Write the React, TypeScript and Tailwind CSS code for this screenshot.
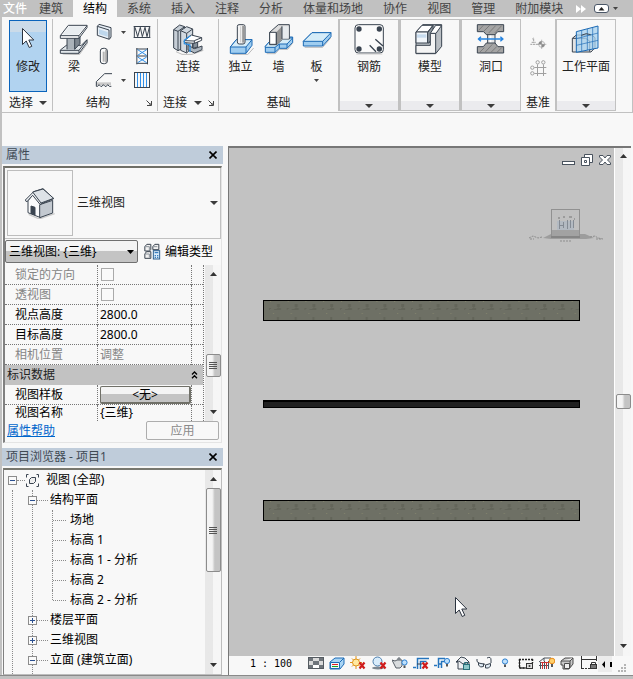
import type { ReactNode } from "react";

const TABS = ["建筑", "结构", "系统", "插入", "注释", "分析", "体量和场地", "协作", "视图", "管理", "附加模块"];

const INK = "#3a4450";

function Caret({ className = "" }: { className?: string }) {
  return (
    <svg className={className} width="8" height="4" viewBox="0 0 8 4" fill="#3c3c3c">
      <path d="M0 0h8L4 4z" />
    </svg>
  );
}

function SmallCaret() {
  return (
    <svg width="5" height="3" viewBox="0 0 5 3" fill="#444">
      <path d="M0 0h5L2.5 3z" />
    </svg>
  );
}

function Launcher() {
  return (
    <svg width="6" height="6" viewBox="0 0 6 6" fill="none" stroke="#444">
      <path d="M0.5 0.5L4 4M5.5 1v4.5H1M3 5h2V3" />
    </svg>
  );
}

/* ---------- ribbon icons ---------- */

function BeamIcon() {
  return (
    <svg width="32" height="32" viewBox="174 66 96 96" stroke={INK} strokeWidth="3" strokeLinejoin="round">
      <path d="M188 159l50 2 24-33v-6" stroke="#bbb" fill="none" />
      <path d="M181 147l18-14h45l17-17v8l-24 33h-56z" fill="#e3e8ec" />
      <path d="M181 148h56l24-31M237 148v9" fill="none" />
      <path d="M201 112h23v34h-23z" fill="#aab2b9" stroke="none" />
      <path d="M224 112l16-8v24l-16 17z" fill="#7c858e" />
      <path d="M201 112v33" />
      <path d="M181 104l24-31h56v7l-24 32h-56z" fill="#fff" />
      <path d="M181 104h56l24-30M237 104v8" fill="none" />
      <path d="M187 101l20-25h49l-21 25z" fill="#e9edf0" stroke="none" />
    </svg>
  );
}

function ConnectionIcon() {
  return (
    <svg width="32" height="32" viewBox="516 68 96 96" stroke={INK} strokeWidth="3" strokeLinejoin="round">
      <path d="M528 154l18 8h30l34-12" stroke="#bbb" fill="none" />
      <path d="M521 88l18-14 15 5v62l-20 10-13-8z" fill="#c6ced6" />
      <path d="M521 88l13 5v58M534 93l20-14" fill="none" />
      <path d="M542 91l18-12 18 7v55l-18 17-18-8z" fill="#d3dae1" />
      <path d="M542 91l18 8v58M560 99l18-13" fill="none" />
      <path d="M564 135l20 10 22-8v11l-22 10-20-9z" fill="#aeb7c0" />
      <path d="M579 122l14-4v22l-14 4z" fill="#86919c" />
      <path d="M552 122l22-18 31 8v8l-22 9-29-2z" fill="#fff" />
      <path d="M583 121l22-9M583 121v8M554 121l29 1" fill="none" />
      <path d="M571 106l-18 14v10l17 4v22" fill="none" stroke="#2f8fe0" strokeWidth="4" />
    </svg>
  );
}

function IsolatedIcon() {
  return (
    <svg width="32" height="32" viewBox="42 68 96 96" stroke="#1c6ab5" strokeWidth="3" strokeLinejoin="round">
      <path d="M64 163h46l18-20" stroke="#bbb" fill="none" />
      <path d="M58 140l18-22h47v17l-18 24H58z" fill="#9fcdf0" />
      <path d="M58 140l18-22h47l-18 22z" fill="#d5ecf8" />
      <path d="M105 140v19" />
      <path d="M79 78q0-5 5-5h13q5 0 5 5v47q0 6-6 6H85q-6 0-6-6z" fill="#f4f4f4" stroke={INK} />
      <path d="M97 76v51" stroke="#999" strokeWidth="7" />
      <path d="M89 78v48" stroke="#c9c9c9" strokeWidth="3" />
    </svg>
  );
}

function WallFoundationIcon() {
  return (
    <svg width="32" height="32" viewBox="156 68 96 96" stroke="#1c6ab5" strokeWidth="3" strokeLinejoin="round">
      <path d="M167 160h26l12-13h25l16-20" stroke="#bbb" fill="none" />
      <path d="M163 138l22-25 28-3h32v16l-17 18h-23l-13 12h-29z" fill="#9fcdf0" />
      <path d="M163 138l22-25h60l-17 18h-23l-13 10h-29z" fill="#d5ecf8" />
      <path d="M192 141v15M205 131v13M228 131v13" />
      <path d="M176 96l26-23h33v43h-20l-18 17h-21z" fill="#ddd" stroke={INK} />
      <path d="M176 96h20v36h-20z" fill="#fff" stroke={INK} />
      <path d="M196 96l17-18v37l-17 18z" fill="#939393" stroke="none" />
      <path d="M213 78h20v37h-20z" fill="#e7ebee" stroke="none" />
      <path d="M196 96v37M213 78v38" stroke={INK} />
    </svg>
  );
}

function SlabIcon() {
  return (
    <svg width="32" height="32" viewBox="270 68 96 96" stroke="#1c6ab5" strokeWidth="3" strokeLinejoin="round">
      <path d="M281 141h54l24-28" stroke="#bbb" fill="none" />
      <path d="M277 123l26-26h57v12l-25 28h-58z" fill="#9fcdf0" />
      <path d="M277 123l26-26h57l-25 26z" fill="#d5ecf8" />
      <path d="M335 123v14" />
    </svg>
  );
}

function RebarIcon() {
  return (
    <svg width="32" height="32" viewBox="424 68 96 96" stroke={INK} strokeWidth="3">
      <rect x="430" y="73" width="85" height="85" rx="10" fill="#fbfbfb" />
      <path d="M434 161h78" stroke="#ccc" />
      <g fill={INK} stroke="none">
        <circle cx="442" cy="86" r="8" />
        <circle cx="503" cy="86" r="8" />
        <circle cx="442" cy="146" r="8" />
        <circle cx="503" cy="146" r="8" />
      </g>
      <path d="M491 117l23 20M474 135l19 19" strokeWidth="4" />
    </svg>
  );
}

function ModelIcon() {
  return (
    <svg width="32" height="32" viewBox="-14 68 96 96" stroke={INK} strokeWidth="3" strokeLinejoin="round">
      <path d="M-8 95L12 73h57v65l-18 22h-59z" fill="#b9bec3" />
      <path d="M-8 95L10 75h33l-16 20z" fill="#fff" />
      <path d="M-8 95h35v33h-35z" fill="#f2f6fa" />
      <path d="M-5 102h28v10h-28z" fill="#c8dcef" stroke="none" />
      <path d="M27 97l16-22v33l-12 20h-4z" fill="#8e969d" />
      <path d="M-8 135h43v-36h16v60h-59z" fill="#f4f4f4" />
      <path d="M35 99l16-24h18l-17 24z" fill="#fff" />
    </svg>
  );
}

function OpeningIcon() {
  return (
    <svg width="32" height="32" viewBox="162 68 96 96" stroke={INK} strokeWidth="3" strokeLinejoin="round">
      <path d="M200 94h22v42h-22z" fill="#e6e6e6" />
      <path d="M206 96h5v38h-5z" fill="#fff" stroke="none" />
      <path d="M169 73h79v21h-18l-8 9h-26l-8-9h-19z" fill="#a4a4a4" />
      <path d="M169 158v-19h18l9-11h26l9 11h17v19z" fill="#a4a4a4" />
      <path d="M173 90l14-15M189 92l17-17M203 98l21-22M221 98l21-22M176 156l14-14M192 156l22-24M210 156l18-18M228 156l14-14" stroke="#666" strokeWidth="2" />
      <path d="M173 116h72M180 109l-8 7 8 7M238 109l8 7-8 7" fill="none" stroke="#2684e0" strokeWidth="4" />
    </svg>
  );
}

function WorkplaneIcon() {
  return (
    <svg width="32" height="32" viewBox="450 70 96 96" stroke={INK} strokeWidth="3" strokeLinejoin="round">
      <path d="M457 116l12-10h46l10 8v30l-12 13h-56z" fill="#e3e3e3" />
      <path d="M457 116h40l12 8v32" fill="none" />
      <path d="M469 96l65-17v66l-65 13z" fill="#a5d2f0" fillOpacity="0.75" stroke="#1c6ab5" />
      <path d="M485 92v63M502 88v63M518 83v65M469 117l65-17M469 137l65-15" stroke="#1c6ab5" strokeWidth="2" />
      <path d="M484 107q15-9 28-2" stroke={INK} fill="none" />
    </svg>
  );
}

function WallIcon() {
  return (
    <svg width="18" height="18" viewBox="291 69 54 54" stroke={INK} strokeWidth="3" strokeLinejoin="round">
      <path d="M298 79l5-6 36 10v28l-5 7-36-12z" fill="#e8eff6" />
      <path d="M298 79l35 11v27" fill="none" />
      <path d="M303 88l26 8v14l-26-8z" fill="#bed7ec" stroke="none" />
    </svg>
  );
}

function ColumnIcon() {
  return (
    <svg width="18" height="18" viewBox="291 141 54 54" stroke={INK} strokeWidth="3">
      <rect x="307" y="145" width="21" height="46" rx="8" fill="#fafafa" />
      <path d="M317 155v30" stroke="#b5b5b5" strokeWidth="6" />
      <path d="M324 149v38" stroke="#777" strokeWidth="3" />
    </svg>
  );
}

function FloorIcon() {
  return (
    <svg width="18" height="18" viewBox="291 215 54 54" stroke={INK} strokeWidth="3" fill="none">
      <path d="M294 249h45v8h-45z" fill="#c9c9c9" stroke="none" />
      <path d="M342 223h-22l-25 24v14h4l4-5 5 5h4l4-5 5 5h4l4-5 5 5h6" />
    </svg>
  );
}

function TrussIcon() {
  return (
    <svg width="18" height="18" viewBox="402 69 54 54" stroke={INK} strokeWidth="3" fill="none">
      <path d="M404 79.500h50M404 112.500h50M406 80v32M452 80v32" />
      <path d="M408 82l8 28 8-28 6 28 8-28 6 28 7-28" />
    </svg>
  );
}

function BraceIcon() {
  return (
    <svg width="18" height="18" viewBox="402 141 54 54" fill="none" strokeWidth="3">
      <path d="M413.500 144v49M445.500 144v49M413 147h32M413 168h32M413 190h32" stroke={INK} />
      <path d="M416 149l27 17M443 149l-27 17M416 171l27 17M443 171l-27 17" stroke="#3090ea" />
    </svg>
  );
}

function BeamSystemIcon() {
  return (
    <svg width="18" height="18" viewBox="402 213 54 54" fill="none" strokeWidth="3">
      <rect x="406.500" y="217.500" width="45" height="45" stroke={INK} />
      <path d="M415.500 219v42M424.500 219v42M433.500 219v42M442.500 219v42" stroke="#3090ea" />
    </svg>
  );
}

function LevelIcon() {
  return (
    <svg width="18" height="18" viewBox="327 105 54 54" stroke="#a0a0a0" strokeWidth="3" fill="none">
      <path d="M331 133h26M337 117l4-3v14M335 127h12" strokeDasharray="6 2" />
      <circle cx="365" cy="133" r="9" strokeWidth="2" />
      <path d="M365 119v28M351 133h28" strokeWidth="2" />
      <path d="M365 124v9h-9a9 9 0 019-9zM365 142v-9h9a9 9 0 01-9 9z" fill="#8a8a8a" stroke="none" />
    </svg>
  );
}

function GridIcon() {
  return (
    <svg width="18" height="18" viewBox="327 177 54 54" stroke="#a0a0a0" strokeWidth="3" fill="none">
      <circle cx="353" cy="187" r="5" />
      <circle cx="370" cy="187" r="5" />
      <circle cx="337" cy="203" r="5" />
      <circle cx="337" cy="220" r="5" />
      <path d="M352.500 193v35M370.500 193v35M343 202.500h36M343 220.500h36" />
    </svg>
  );
}

function PointerIcon({ className = "" }: { className?: string }) {
  return (
    <svg className={className} width="14" height="22" viewBox="0 0 14 22" fill="#fff" stroke="#2c3440" strokeLinejoin="round">
      <path d="M1.500 1.500v16l3.700-3.500 3 6.500 2.600-1.200-3-6.300h5z" />
    </svg>
  );
}

/* ---------- ribbon building blocks ---------- */

function BigButton({ icon, label, caret }: { icon: ReactNode; label: string; caret?: boolean }) {
  return (
    <button type="button" className="flex min-w-[38px] flex-col items-center pt-1">
      {icon}
      <span className="mt-1 leading-4 whitespace-nowrap">{label}</span>
      {caret && (
        <span className="mt-1">
          <SmallCaret />
        </span>
      )}
    </button>
  );
}

function CollapsedPanel({ icon, label }: { icon: ReactNode; label: string }) {
  return (
    <section className="flex w-[61px] flex-col border-y border-r border-l-2 border-[#c1c1c1] bg-[#f8f8f8]">
      <div className="-mt-px flex flex-1 justify-center">
        <BigButton icon={icon} label={label} />
      </div>
      <button type="button" aria-label={`展开${label}`} className="flex h-[9px] items-center justify-center bg-[#ebebee]">
        <Caret />
      </button>
    </section>
  );
}

function Ribbon() {
  return (
    <header>
      <nav className="flex h-[17px] items-center bg-[#c1c1c1] leading-4 text-[#444]">
        <button type="button" className="w-[29px] shrink-0 pl-[3px] text-left font-medium text-white">文件</button>
        {TABS.map((tab) => (
          <button
            key={tab}
            type="button"
            className={`h-full shrink-0 px-[10px] whitespace-nowrap ${tab === "结构" ? "bg-[#f8f8f8] text-black" : ""}`}
          >
            {tab}
          </button>
        ))}
        <svg className="ml-[3px] shrink-0" width="10" height="8" viewBox="0 0 10 8" fill="#fff">
          <path d="M0 0l5 4-5 4zM5 0l5 4-5 4z" />
        </svg>
        <button type="button" aria-label="最小化功能区" className="ml-2 flex shrink-0 items-center gap-1">
          <svg width="15" height="9" viewBox="0 0 15 9">
            <rect x="0.500" y="0.500" width="14" height="8" rx="2.500" fill="#fff" stroke="#4a5666" />
            <path d="M4.500 6.500h6l-3-3.500z" fill="#222" />
          </svg>
          <SmallCaret />
        </button>
      </nav>

      <div className="flex h-24 border-r border-b border-l-2 border-[#c1c1c1] bg-[#f8f8f8] pt-[2px] pb-px text-[#222]">
        <section className="flex w-[51px] shrink-0 flex-col border-r border-[#c1c1c1]">
          <button
            type="button"
            className="mt-px ml-[7px] flex h-[72px] w-[38px] flex-col items-center border border-[#0a64bc] bg-linear-to-b from-[#cbdbe9] from-15% to-[#b1d3f0] to-15%"
          >
            <PointerIcon className="mt-1.5" />
            <span className="mt-2.5 leading-4">修改</span>
          </button>
          <button type="button" className="mt-[3px] ml-[7px] flex items-center gap-1.5 leading-4">
            选择 <Caret />
          </button>
        </section>

        <section className="flex w-[105px] shrink-0 flex-col border-r border-[#c1c1c1]">
          <div className="flex h-[76px] pl-0.5">
            <BigButton icon={<BeamIcon />} label="梁" />
            <div className="ml-0.5 grid grid-cols-[18px_14px_auto] content-start items-center gap-y-1.5 pt-1">
              <button type="button" aria-label="墙"><WallIcon /></button>
              <span className="pl-2"><SmallCaret /></span>
              <button type="button" aria-label="桁架" className="pl-1.5"><TrussIcon /></button>
              <button type="button" aria-label="柱"><ColumnIcon /></button>
              <span />
              <button type="button" aria-label="支撑" className="pl-1.5"><BraceIcon /></button>
              <button type="button" aria-label="楼板"><FloorIcon /></button>
              <span className="pl-2"><SmallCaret /></span>
              <button type="button" aria-label="梁系统" className="pl-1.5"><BeamSystemIcon /></button>
            </div>
          </div>
          <div className="flex items-center pr-[5px] pl-[33px] leading-4">
            <span className="flex-1">结构</span>
            <Launcher />
          </div>
        </section>

        <section className="flex w-[61px] shrink-0 flex-col border-r border-[#c1c1c1]">
          <div className="flex h-[76px] justify-center">
            <BigButton icon={<ConnectionIcon />} label="连接" />
          </div>
          <div className="flex items-center justify-between pr-1 pl-[5px] leading-4">
            连接 <Caret />
            <Launcher />
          </div>
        </section>

        <section className="flex w-[119px] shrink-0 flex-col">
          <div className="flex h-[76px] justify-center">
            <BigButton icon={<IsolatedIcon />} label="独立" />
            <BigButton icon={<WallFoundationIcon />} label="墙" />
            <BigButton icon={<SlabIcon />} label="板" caret />
          </div>
          <div className="text-center leading-4">基础</div>
        </section>

        <CollapsedPanel icon={<RebarIcon />} label="钢筋" />
        <CollapsedPanel icon={<ModelIcon />} label="模型" />
        <CollapsedPanel icon={<OpeningIcon />} label="洞口" />

        <section className="flex w-[34px] shrink-0 flex-col items-center">
          <div className="flex h-[76px] flex-col gap-1.5 pt-4">
            <button type="button" aria-label="标高"><LevelIcon /></button>
            <button type="button" aria-label="轴网"><GridIcon /></button>
          </div>
          <div className="leading-4">基准</div>
        </section>

        <CollapsedPanel icon={<WorkplaneIcon />} label="工作平面" />
      </div>
    </header>
  );
}

/* ---------- left palettes ---------- */

function PaletteTitle({ children }: { children: ReactNode }) {
  return (
    <div className="flex h-[18px] shrink-0 items-center justify-between bg-[#bfccda] pr-1.5 pl-1 text-[#3f4a55]">
      <h2 className="leading-4">{children}</h2>
      <button type="button" aria-label="关闭">
        <svg width="8" height="8" viewBox="0 0 8 8" stroke="#000" strokeWidth="1.600">
          <path d="M0.500 0.500l7 7M7.500 0.500l-7 7" />
        </svg>
      </button>
    </div>
  );
}

function ScrollArrow({ down }: { down?: boolean }) {
  return (
    <svg width="7" height="4" viewBox="0 0 7 4" fill="#333">
      <path d={down ? "M0 0h7L3.500 4z" : "M0 4h7L3.500 0z"} />
    </svg>
  );
}

function ScrollBar({ thumb, before, after }: { thumb: string; before: string; after: string }) {
  return (
    <div className="flex w-4 shrink-0 flex-col items-center bg-linear-to-r from-[#e8e8e8] from-50% to-[#f6f6f6] to-50% py-[7px]">
      <ScrollArrow />
      <div className={before} />
      <div
        className={`flex w-[15px] shrink-0 flex-col items-center justify-center gap-px rounded-xs border border-[#8c8c8c] bg-linear-to-r from-[#f4f4f4] from-40% to-[#c4c4c4] to-60% ${thumb}`}
      >
        <i className="h-px w-2 bg-[#555]" />
        <i className="h-px w-2 bg-[#555]" />
        <i className="h-px w-2 bg-[#555]" />
        <i className="h-px w-2 bg-[#555]" />
      </div>
      <div className={after} />
      <ScrollArrow down />
    </div>
  );
}

function HouseIcon() {
  return (
    <svg width="32" height="32" viewBox="72 124 96 96" stroke={INK} strokeWidth="3" strokeLinejoin="round">
      <path d="M86 206l32 14 46-16" stroke="#ccc" strokeWidth="4" fill="none" />
      <path d="M84 165l16-20 22 26v45l-38-15z" fill="#fafbfc" />
      <path d="M119 177l39-13v38l-39 14z" fill="#c3c9d0" />
      <path d="M76 163l25-25 28-9 32 30-41 17-22-27-18 20z" fill="#eceff2" />
      <path d="M98 139l31-9 32 28-38 14z" fill="#dde2e7" />
      <path d="M93 181l12 4v23l-12-5z" fill={INK} />
    </svg>
  );
}

function EditTypeIcon() {
  return (
    <svg width="17" height="17" viewBox="431 292 51 51" fill="#f2f2f2" stroke={INK} strokeWidth="3">
      <path d="M433.500 303l6-7h12v15l-4 5h-14zM457.500 303l6-7h12v16h-18zM433.500 325l5-7h13v20h-18z" />
      <path d="M435 303h12v11M459 303h12M435 325h12v11" fill="none" stroke="#8b929a" />
      <rect x="459" y="315" width="19" height="25" fill="#d8ebfa" stroke="#2d5f8f" />
      <path d="M463 321h11M463 330h4M470 330h4M463 335h4M470 335h4" stroke="#1c6ab5" />
    </svg>
  );
}

type Prop = { label: string; value?: string; dim?: boolean; last?: boolean; kind: "check" | "text" | "static" | "button" };

const VIEW_PROPS: Prop[] = [
  { label: "锁定的方向", kind: "check", dim: true },
  { label: "透视图", kind: "check", dim: true },
  { label: "视点高度", kind: "text", value: "2800.0" },
  { label: "目标高度", kind: "text", value: "2800.0" },
  { label: "相机位置", kind: "static", value: "调整", dim: true },
];

const ID_PROPS: Prop[] = [
  { label: "视图样板", kind: "button", value: "<无>" },
  { label: "视图名称", kind: "text", value: "{三维}", last: true },
];

function PropRow({ prop }: { prop: Prop }) {
  const { label, value, kind, dim, last } = prop;
  const rule = last ? "border-dotted border-[#777]" : "border-b border-dotted border-[#777]";
  return (
    <tr className={`${last ? "h-4" : "h-5"} ${dim ? "text-[#858585]" : "text-black"}`}>
      <th scope="row" className={`${rule} p-0 pl-2.5 text-left leading-4 font-normal`}>
        <label htmlFor={label} className="block">{label}</label>
      </th>
      <td className={`${rule} border-l p-0 pl-0.5 leading-4`}>
        {kind === "check" && (
          <input
            id={label}
            type="checkbox"
            disabled
            className="ml-px block h-[13px] w-[13px] appearance-none border border-[#aaa] bg-[#fafafa]"
          />
        )}
        {kind === "text" && <input id={label} type="text" defaultValue={value} className="block h-4 w-full bg-transparent leading-4" />}
        {kind === "static" && <output id={label} className="block">{value}</output>}
        {kind === "button" && (
          <button
            id={label}
            type="button"
            className="block h-[18px] w-[91px] rounded-xs border border-r-2 border-b-2 border-[#707068] bg-linear-to-b from-[#f4f4f4] from-45% to-[#c4c4c4] to-50% leading-4"
          >
            {value}
          </button>
        )}
      </td>
      <td className={`${rule} border-l p-0`} />
    </tr>
  );
}

function PropertiesPalette() {
  return (
    <section className="shrink-0">
      <PaletteTitle>属性</PaletteTitle>
      <div className="mx-px mt-0.5 border-t-2 border-r border-b border-l-2 border-[#e4e4e4] border-t-[#6f6f68] border-l-[#808080]">
        <button type="button" className="flex w-full items-center border-r border-b border-[#c1c1c1] py-0.5 pr-[2px] pl-0.5">
          <span className="flex h-[66px] w-[66px] items-center justify-center border border-[#bdbdbd]">
            <HouseIcon />
          </span>
          <span className="ml-1 flex-1 text-left text-[#222]">三维视图</span>
          <Caret />
        </button>

        <div className="flex h-[26px] items-center pb-px">
          <div className="relative">
            <select
              aria-label="实例选择"
              className="block h-[23px] w-[133px] appearance-none rounded-xs border border-[#707070] bg-linear-to-b from-[#f4f4f4] from-45% to-[#c4c4c4] to-50% pl-[3px] text-xs text-black"
            >
              <option>三维视图: {"{三维}"}</option>
            </select>
            <svg className="pointer-events-none absolute top-2.5 right-1" width="7" height="4" viewBox="0 0 7 4">
              <path d="M0 0h7L3.500 4z" />
            </svg>
          </div>
          <button type="button" className="ml-1.5 flex items-center gap-1 leading-4 text-black">
            <EditTypeIcon /> 编辑类型
          </button>
        </div>

        <div className="flex">
          <div className="flex-1">
            <table className="w-full table-fixed border-separate border-spacing-0 border-r border-dotted border-[#777]">
              <colgroup>
                <col />
                <col className="w-[94px]" />
                <col className="w-3" />
              </colgroup>
              <tbody>
                {VIEW_PROPS.map((prop) => (
                  <PropRow key={prop.label} prop={prop} />
                ))}
                <tr className="h-5 bg-[#c2c2c2] text-[#222]">
                  <th colSpan={3} scope="rowgroup" className="p-0 leading-4 font-normal">
                    <button type="button" className="flex w-full items-center justify-between pr-[5px] pl-0.5">
                      标识数据
                      <svg width="7" height="8" viewBox="0 0 7 8" fill="none" stroke="#000" strokeWidth="1.300">
                        <path d="M1 3.500l2.500-2.500 2.500 2.500M1 7.200l2.500-2.500 2.500 2.500" />
                      </svg>
                    </button>
                  </th>
                </tr>
                {ID_PROPS.map((prop) => (
                  <PropRow key={prop.label} prop={prop} />
                ))}
              </tbody>
            </table>
          </div>
          <div className="w-px" />
          <ScrollBar thumb="h-[23px]" before="grow-[76]" after="grow-[32]" />
        </div>

        <div className="flex h-[21px] items-start justify-between pr-[2px] pl-0.5">
          <a href="#help" className="leading-5 text-[#0066cc] underline">属性帮助</a>
          <button type="button" disabled className="h-[19px] w-[73px] rounded-xs border border-[#adadad] leading-4 text-[#8a8a8a]">
            应用
          </button>
        </div>
      </div>
    </section>
  );
}

const LEVELS = ["场地", "标高 1", "标高 1 - 分析", "标高 2", "标高 2 - 分析"];

function Toggle({ open }: { open?: boolean }) {
  return (
    <button type="button" aria-label={open ? "折叠" : "展开"} className="shrink-0">
      <svg width="9" height="9" viewBox="0 0 9 9" fill="none">
        <rect x="0.500" y="0.500" width="8" height="8" fill="#fafafa" stroke="#8c8c8c" />
        <path d={open ? "M2 4.500h5" : "M2 4.500h5M4.500 2v5"} stroke="#2b4f8f" />
      </svg>
    </button>
  );
}

function Branch({ label, open }: { label: string; open?: boolean }) {
  return (
    <div className="flex h-5 items-center">
      <span className="-ml-[5px] flex items-center">
        <Toggle open={open} />
      </span>
      <span className="w-[11px] border-t border-dotted border-[#8a8a8a]" />
      <span className="ml-[2px] leading-5">{label}</span>
    </div>
  );
}

function ProjectBrowser() {
  return (
    <section className="mt-[5px] flex min-h-0 flex-1 flex-col">
      <PaletteTitle>项目浏览器 - 项目1</PaletteTitle>
      <div className="mx-px mt-[2px] flex min-h-0 flex-1 border-t-2 border-r border-b border-l border-[#bdbdbd] border-t-[#77776f] border-l-[#808080]">
        <div className="min-w-0 flex-1 overflow-hidden pl-1 text-black">
          <div className="flex h-5 items-center">
            <Toggle open />
            <span className="w-2 border-t border-dotted border-[#8a8a8a]" />
            <svg className="shrink-0" width="15" height="15" viewBox="0 0 15 15" fill="none" stroke={INK}>
              <path d="M3.500 1.500h-2v3M11.500 1.500h2v3M3.500 13.500h-2v-3M11.500 13.500h2v-3" />
              <path d="M4.500 6.500l2-2h4v4l-2 2h-4z" fill="#eee" />
            </svg>
            <span className="ml-1.5 leading-5">视图 (全部)</span>
          </div>
          <div className="ml-1 border-l border-dotted border-[#8a8a8a] pl-[19px]">
            <div className="border-l border-dotted border-[#8a8a8a] pb-2">
              <Branch label="结构平面" open />
              <ul className="ml-[19px]">
                {LEVELS.map((level, i) => (
                  <li key={level} className="flex h-5">
                    <span className={`w-px border-l border-dotted border-[#8a8a8a] ${i === LEVELS.length - 1 ? "h-2.5" : "h-5"}`} />
                    <span className="mt-2.5 w-[13px] border-t border-dotted border-[#8a8a8a]" />
                    <span className="ml-1 leading-5">{level}</span>
                  </li>
                ))}
              </ul>
              <Branch label="楼层平面" />
              <Branch label="三维视图" />
              <Branch label="立面 (建筑立面)" open />
            </div>
          </div>
        </div>
        <ScrollBar thumb="h-[84px]" before="h-[7px]" after="flex-1" />
      </div>
    </section>
  );
}

/* ---------- view window ---------- */

function ConcreteBand({ className }: { className: string }) {
  return (
    <svg className={`absolute right-[34px] left-[34px] h-[21px] w-[calc(100%-68px)] border border-black bg-[#6e7065] ${className}`}>
      <defs>
        <pattern id="concrete" width="17.75" height="19" patternUnits="userSpaceOnUse">
          <path d="M13 3h3v3h-1v1h2v2h-7V8h3V7h1V6h-1zM5 7h2v1H6v1H5zM13 16h2v3h-2z" fill="#63655a" />
          <path d="M6 0h1v1H6zM9 13h1v-1H9z" fill="#84846d" />
        </pattern>
      </defs>
      <rect width="100%" height="100%" fill="url(#concrete)" />
    </svg>
  );
}

function ViewCube() {
  return (
    <svg className="absolute top-[60px] right-[9px]" width="78" height="34" viewBox="0 0 78 34">
      <path d="M16 30l8-4h34l9 4-8 1H24z" fill="#9d9d9d" />
      <path d="M2 30l4-2 5 2 4-1M63 29l5-1 3 2 5 1M3 31h4M69 31h5M33 33h12" stroke="#8d8d8d" strokeDasharray="2 1" fill="none" />
      <rect x="24.500" y="1.500" width="28" height="28" fill="#c0c0c0" stroke="#919191" />
      <path d="M25 22h27v7H25z" fill="#a2a2a2" />
      <path d="M30 13h17v9H30z" fill="#b3bac2" />
      <path d="M32.500 12v9M36.500 14v6M33 17.500h3M40.500 12v9M43.500 20v-8M46.500 12v8" stroke="#848b94" fill="none" />
      <path d="M31 10h2M36 9h2M42 9h3M47 11h1" stroke="#777" />
      <path d="M24 28h29v2H24z" fill="#858585" />
    </svg>
  );
}

function WindowButtons() {
  return (
    <div className="absolute top-1.5 right-[3px] flex items-center gap-[6px]">
      <button type="button" aria-label="最小化">
        <svg width="13" height="12" viewBox="0 0 13 12">
          <rect x="0.500" y="7.500" width="12" height="3" fill="#fff" stroke="#49535e" />
        </svg>
      </button>
      <button type="button" aria-label="还原">
        <svg width="12" height="12" viewBox="0 0 12 12" fill="#fff" stroke="#49535e">
          <path d="M3.500 0.500h8v8h-8z" />
          <path d="M0.500 3.500h8v8h-8z" />
          <path d="M3.500 6.500h2v2h-2z" />
        </svg>
      </button>
      <button type="button" aria-label="关闭视图">
        <svg width="12" height="12" viewBox="0 0 12 12">
          <path d="M0.500 1.500h3.500L6 4l2-2.500h3.500v1.500L8.500 6l3 3v1.500H8L6 8l-2 2.500H0.500V9l3-3-3-3z" fill="#fff" stroke="#49535e" />
        </svg>
      </button>
    </div>
  );
}

function RedCross() {
  return <path d="M9.500 6.500l5 6M14.500 6.500l-5 6" stroke="#cf1b1b" strokeWidth="2.200" />;
}

function Bulb({ x, y, fill = "#bfe0fb" }: { x: number; y: number; fill?: string }) {
  return (
    <g>
      <circle cx={x} cy={y} r="2.600" fill={fill} stroke="#2c7fd0" />
      <path d={`M${x - 1} ${y + 3}h2v2.500h-2z`} fill="#555" />
    </g>
  );
}

const VIEW_CONTROLS: { label: string; icon: ReactNode }[] = [
  {
    label: "详细程度",
    icon: (
      <>
        <rect x="0.500" y="1.500" width="15" height="11" fill="#fff" stroke="#555b61" />
        <path d="M1 2h4v3H1zM11 2h4v3h-4zM5 5h6v4H5zM1 9h4v3H1zM11 9h4v3h-4z" fill="#6f757b" />
        <path d="M5 2h6v3H5zM1 5h4v4H1zM11 5h4v4h-4z" fill="#dadada" />
      </>
    ),
  },
  {
    label: "视觉样式",
    icon: (
      <>
        <path d="M1 6l5-4h9v6l-4 5H1z" fill="#a9d5f5" stroke="#1c6ab5" />
        <path d="M1.500 6.500h9v6h-9z" fill="#f2f8fc" stroke="#1c6ab5" />
        <path d="M11 6l4-4" stroke="#1c6ab5" />
        <path d="M3 8.500h6" stroke="#d22" />
        <path d="M3 10.500h6" stroke="#1ca01c" />
      </>
    ),
  },
  {
    label: "关闭日光路径",
    icon: (
      <>
        <path d="M6 0v13M0 6.500h12M2 2.500l8 8M10 2.500l-8 8" stroke="#e0941a" />
        <circle cx="6" cy="6.500" r="3.500" fill="#ffe9a0" stroke="#e0941a" />
        <RedCross />
      </>
    ),
  },
  {
    label: "关闭阴影",
    icon: (
      <>
        <ellipse cx="7" cy="12" rx="6" ry="1.500" fill="#7c8791" />
        <circle cx="6.500" cy="5.500" r="4.500" fill="#d8ecfb" stroke="#4d7fae" />
        <RedCross />
      </>
    ),
  },
  {
    label: "显示渲染对话框",
    icon: (
      <>
        <path d="M0 4l3 1 2-1h5v6l-2 2H4L2 8z" fill="#d9dcde" stroke="#596068" />
        <path d="M5 3h4M7 1v2" stroke="#596068" />
        <Bulb x={12.5} y={6.5} />
      </>
    ),
  },
  {
    label: "裁剪视图",
    icon: (
      <>
        <path d="M0 11.500h3M4.500 13V2.500H16M7.500 13V5.500h6" stroke="#2474bd" strokeWidth="1.500" fill="none" />
        <path d="M4 8h5" stroke={INK} />
        <RedCross />
      </>
    ),
  },
  {
    label: "显示裁剪区域",
    icon: (
      <>
        <path d="M0 9.500h3M4.500 12V2.500H11M7.500 12V5.500h3M4 8h4" stroke="#2474bd" strokeWidth="1.500" fill="none" />
        <Bulb x={13} y={5} />
      </>
    ),
  },
  {
    label: "锁定三维视图",
    icon: (
      <>
        <path d="M1 6l5-5 4 1 4 4v7H3V6z" fill="#eef0f2" stroke={INK} />
        <path d="M1 6l3-1 4 3 6-2" fill="none" stroke={INK} />
        <rect x="8.500" y="8.500" width="6" height="5" fill="#8fc9c9" stroke="#2b6f78" />
        <path d="M9.500 8V6.500h3V8" fill="none" stroke="#2b6f78" />
      </>
    ),
  },
  {
    label: "临时隐藏",
    icon: (
      <>
        <path d="M1 3q-1 3 2 4M11 2q4-2 4 2v3M6.500 8q1.500-1 3 1" fill="none" stroke={INK} />
        <path d="M2.500 7l5 1v2.500l-3 0.500-2-2zM9.500 9l5-1.500v2.500l-2 2h-3z" fill="#dfeaf3" stroke={INK} />
      </>
    ),
  },
  { label: "显示隐藏图元", icon: <Bulb x={8} y={5.5} /> },
  {
    label: "临时视图属性",
    icon: (
      <>
        <path d="M1 3.500h14M1.500 3v9h7M14.500 3v4" fill="none" stroke="#222" strokeDasharray="2 1" strokeWidth="1.500" />
        <path d="M1.500 4v8h6" fill="none" stroke="#222" />
        <rect x="8.500" y="7.500" width="6" height="5" fill="#ddd" stroke="#333" />
        <circle cx="11.500" cy="10" r="1" fill="#333" />
      </>
    ),
  },
  {
    label: "分析模型",
    icon: (
      <>
        <path d="M0 6l5-4h7M1.500 6v7M5.500 5v8M9.500 5v8M0 9.500h10M5 2v3" fill="none" stroke="#4a525b" />
        <path d="M2 6.500h8M3.500 7v6M7.500 7v6" fill="none" stroke="#c33" />
        <circle cx="13" cy="5" r="2.800" fill="#ffcf6a" stroke="#e88a1a" />
        <path d="M12 8h2v3h-2z" fill="#555" />
      </>
    ),
  },
  {
    label: "高亮位移集",
    icon: (
      <>
        <path d="M1 5l4-3h8v6l-4 5H3V9H1z" fill="#c9c9c9" stroke="#4b4b4b" />
        <path d="M1 5h9l3-3M4.500 7.500h5v5h-5zM10 5v6" fill="#efefef" stroke="#4b4b4b" />
      </>
    ),
  },
  {
    label: "显示约束",
    icon: (
      <>
        <path d="M0.500 0v13M15.500 0v5M1 3.500h14" fill="none" stroke="#333" />
        <path d="M1 12.500h9" stroke="#333" strokeDasharray="2 1" />
        <rect x="9.500" y="8.500" width="6" height="4" fill="#777" stroke="#333" />
        <path d="M10.500 8V6.500h4V8" fill="none" stroke="#333" />
      </>
    ),
  },
];

function ViewWindow() {
  return (
    <main className="flex min-w-0 flex-1 flex-col border-t-2 border-l border-[#777]">
      <div className="flex min-h-0 flex-1">
        <div className="relative min-w-0 flex-1 overflow-hidden bg-[#c2c2c2]">
          <WindowButtons />
          <ViewCube />
          <ConcreteBand className="top-[152px]" />
          <div className="absolute top-[252px] right-[34px] left-[34px] h-2 border border-t-2 border-black bg-[#202020]" />
          <ConcreteBand className="top-[352px]" />
          <PointerIcon className="absolute top-[448px] left-[225px]" />
        </div>
        <div className="flex w-[17px] shrink-0 flex-col items-center border-l border-white bg-linear-to-r from-[#e8e8e8] from-50% to-[#f6f6f6] to-50% pt-1.5 pb-2">
          <ScrollArrow />
          <div className="flex-1" />
          <div className="h-[15px] w-[15px] rounded-xs border border-[#8c8c8c] bg-linear-to-r from-[#f4f4f4] from-40% to-[#c4c4c4] to-60%" />
          <div className="flex-1" />
          <ScrollArrow down />
        </div>
      </div>
      <footer className="flex h-[19px] shrink-0 items-start bg-[#f8f8f8] pl-[21px]">
        <button type="button" className="w-[58px] text-left font-['DejaVu_Sans_Mono',monospace] text-[10px] leading-4 whitespace-pre text-black">
          1 : 100
        </button>
        <div className="flex gap-[5px]">
          {VIEW_CONTROLS.map((control) => (
            <button key={control.label} type="button" aria-label={control.label}>
              <svg width="16" height="14" viewBox="0 0 16 14" fill="none">
                {control.icon}
              </svg>
            </button>
          ))}
        </div>
        <div className="ml-px flex h-4 w-3.5 items-center bg-[#ececec] pl-1">
          <svg width="10" height="7" viewBox="0 0 10 7">
            <path d="M3 0v7L0 3.500zM8 1h2v5H8z" />
          </svg>
        </div>
        <svg className="mt-2 ml-1.5" width="9" height="9" viewBox="0 0 9 9" fill="#b5b5b5">
          <path d="M6 0h2v2H6zM3 3h2v2H3zM6 3h2v2H6zM0 6h2v2H0zM3 6h2v2H3zM6 6h2v2H6z" />
        </svg>
      </footer>
    </main>
  );
}

export default function App() {
  return (
    <div className="flex h-screen flex-col overflow-hidden bg-[#f8f8f8] font-['Noto_Sans','Noto_Sans_CJK_SC',sans-serif] text-xs">
      <Ribbon />
      <div className="h-[33px] shrink-0 border-l-2 border-[#c1c1c1]" />
      <div className="flex min-h-0 flex-1 border-l-2 border-[#c1c1c1] pr-0.5">
        <aside className="mr-[5px] flex w-[221px] shrink-0 flex-col">
          <PropertiesPalette />
          <ProjectBrowser />
        </aside>
        <ViewWindow />
      </div>
      <div className="h-1 shrink-0 border-t border-[#8a8a8a] bg-[#c1c1c1]" />
    </div>
  );
}
